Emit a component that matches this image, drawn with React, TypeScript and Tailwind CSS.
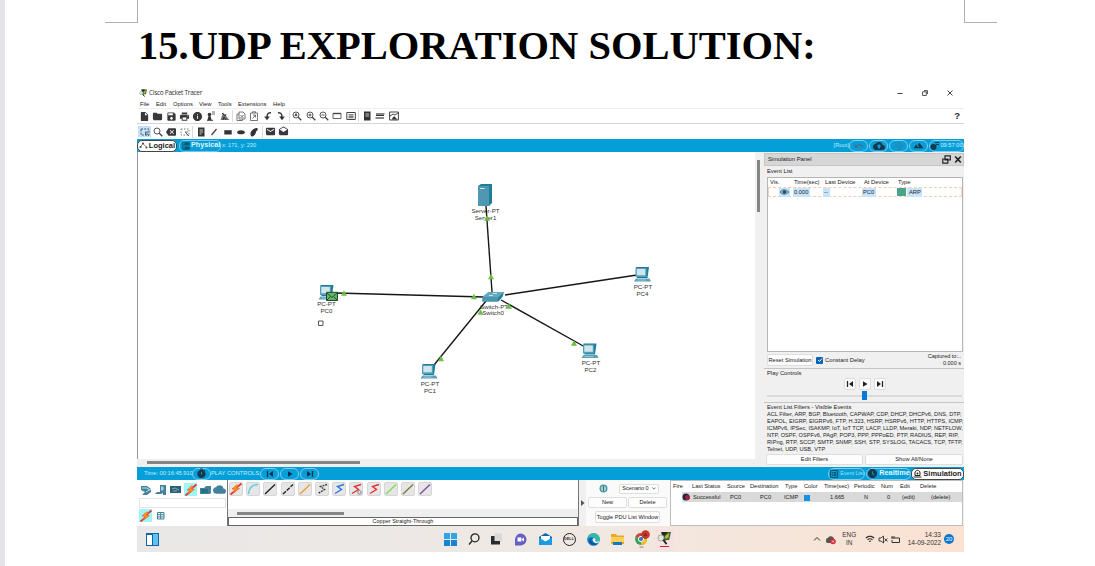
import React from 'react';
import {
  MdInsertDriveFile, MdFolder, MdSave, MdPrint, MdInfo, MdOutlineZoomIn, MdOutlineZoomOut,
  MdBackspace, MdArticle, MdSearch, MdEmail, MdDrafts, MdCloudUpload,
  MdDns, MdCloud, MdFilterHdr, MdUndo, MdOpenWith, MdAccessTimeFilled, MdWifi,
  MdOutlineListAlt, MdTimer,
} from 'react-icons/md';

const SANS = "font-['Liberation_Sans',Arial,sans-serif]";

function Cell({ children, on = false }: { children: React.ReactNode; on?: boolean }) {
  return (
    <span className={`flex h-[11px] w-[13.33px] shrink-0 items-center justify-center text-[11px] text-[#38383c] ${on ? 'bg-[#c5e3fa]' : ''}`}>
      {children}
    </span>
  );
}

const Sep = () => <span className="mx-[1px] h-[12px] w-px shrink-0 bg-[#dcdcdc]" />;

function Svg({ w = 10, h = 10, children }: { w?: number; h?: number; children: React.ReactNode }) {
  return (
    <svg width={w} height={h} viewBox={`0 0 ${w} ${h}`} className="shrink-0" fill="none">
      {children}
    </svg>
  );
}

function TracerLogo({ s = 8 }: { s?: number }) {
  return (
    <svg width={s} height={s} viewBox="0 0 16 16" className="shrink-0">
      <path d="M5 1h11l-2 9-6 1z" fill="#286b2a" />
      <path d="M5 1h7L8 6 6 8z" fill="#15301b" />
      <path d="M9 6l5-4-1 6-3 1z" fill="#dfa43a" />
      <circle cx="4.500" cy="8" r="3.500" fill="#dce7dc" stroke="#9aa89c" />
      <path d="M7 10l4 5" stroke="#222" strokeWidth="2" />
    </svg>
  );
}

function Zoom({ mark }: { mark: string }) {
  return (
    <Svg><circle cx="4" cy="4" r="3" stroke="#555" /><path d="M6.300 6.300L9.300 9.300" stroke="#444" strokeWidth="1.300" /><path d={mark} stroke="#444" strokeWidth=".9" /></Svg>
  );
}

function Toolbars() {
  return (
    <>
      <div className="flex h-[15px] items-center border-b border-[#d5d5d5] pl-[1px]">
        <Cell><MdInsertDriveFile /></Cell>
        <Cell><MdFolder /></Cell>
        <Cell><MdSave /></Cell>
        <Cell><MdPrint /></Cell>
        <Cell><MdInfo /></Cell>
        <Cell>
          <Svg><circle cx="3.500" cy="3.500" r="1.800" fill="#333" /><path d="M1 9.300h6" stroke="#333" /><path d="M2.500 5h2l1 4h-4z" fill="#333" /><path d="M6 1h3M6 3h3" stroke="#555" strokeWidth=".9" /></Svg>
        </Cell>
        <Cell>
          <Svg><path d="M.5 9L3 1.500 9.500 9z" fill="#777" /><path d="M2 2l3 3 1-2M3 9l1-3 2 3" stroke="#333" /></Svg>
        </Cell>
        <Sep />
        <Cell><Svg><path d="M3 1h4l2 2v5H3zM3 3H1v6.500h5.500V8M4.500 4l3 3M7.500 4l-3 3" stroke="#666" strokeWidth=".9" /></Svg></Cell>
        <Cell><Svg><path d="M1.500 2h7v7.500h-7zM3.500 2V.8h3V2M3.500 7.500l3-3.500M4 4h2.500v2.500" stroke="#666" strokeWidth=".9" /></Svg></Cell>
        <Cell><Svg><path d="M4 8C4 4 4 1.500 8 1.800" stroke="#333" strokeWidth="1.400" /><path d="M1.200 5.500h5.600L4 9.300z" fill="#333" /></Svg></Cell>
        <Cell><Svg><path d="M2 1.800C6 1.500 6 4 6 8" stroke="#333" strokeWidth="1.400" /><path d="M3.200 5.500h5.600L6 9.300z" fill="#333" /></Svg></Cell>
        <Sep />
        <Cell><Zoom mark="M2.800 5.200L4 2.500l1.200 2.700M3 4.400h2" /></Cell>
        <Cell><Zoom mark="M2.500 4h3M4 2.500v3" /></Cell>
        <Cell><Zoom mark="M2.500 4h3" /></Cell>
        <Cell><Svg><path d="M1 2.500h8v5H1z" stroke="#666" /><path d="M1 2.500h8" stroke="#444" strokeWidth="1.400" /></Svg></Cell>
        <Cell><Svg><path d="M.8 1.500h8.500v7H.8z" stroke="#444" /><path d="M2.500 3.800h5M2.500 5.300h5M2.500 6.800h5" stroke="#444" strokeWidth=".9" /></Svg></Cell>
        <Sep />
        <Cell><Svg><path d="M2 .5h6.500v9H2z" fill="#333" /><path d="M3.500 3h3.500M3.500 5h3.500" stroke="#ddd" strokeWidth=".9" /></Svg></Cell>
        <Cell><Svg><path d="M1 2h8.500v2H1zM.5 6h8.500v2H.5z" fill="#888" /><path d="M1 4.500h8" stroke="#333" /></Svg></Cell>
        <Cell><Svg><path d="M.6 1h8.800v8H.6z" stroke="#444" /><path d="M1 5l3-2 2 1 3-2" stroke="#444" /><path d="M2.500 8.500L5 5l3.500 3.500z" fill="#333" /></Svg></Cell>
        <span className="mr-[4px] ml-auto text-[9.500px] leading-none font-bold text-[#222]">?</span>
      </div>
      <div className="flex h-[15px] items-center pl-[1px]">
        <Cell on><Svg><path d="M1 2h8v6H1z" stroke="#456" strokeDasharray="2 1.200" /><path d="M5.500 5h3M5.500 5v3M6 5.500l3 3.500" stroke="#456" strokeWidth=".9" /></Svg></Cell>
        <Cell><Zoom mark="" /></Cell>
        <Cell><MdBackspace className="text-[10px]" /></Cell>
        <Cell><Svg><path d="M1 2h8v6H1z" stroke="#777" strokeDasharray="1.500 1.500" /><path d="M5 5l4 4M5 5h3" stroke="#666" /></Svg></Cell>
        <Sep />
        <Cell><Svg><path d="M2 .5h6.500v9H2z" fill="#333" /><path d="M3.500 3h3.500M3.500 5h3.500M3.500 7h2" stroke="#ddd" strokeWidth=".9" /></Svg></Cell>
        <Cell><Svg><path d="M2.500 8l5-6" stroke="#444" strokeWidth="1.300" /></Svg></Cell>
        <Cell><Svg><path d="M1.300 3.200h7.400v4.300H1.300z" fill="#333" /></Svg></Cell>
        <Cell><Svg><ellipse cx="5" cy="5.200" rx="3.800" ry="2" fill="#333" /></Svg></Cell>
        <Cell><Svg><path d="M1.500 7C1 4 6 .5 8 1c1.500 1 .5 3-1 3.500C7 7 5 9.500 3 9.500 2 9.500 1.500 8.500 1.500 7z" fill="#333" /></Svg></Cell>
        <Sep />
        <Cell><MdEmail /></Cell>
        <Cell><MdDrafts /></Cell>
      </div>
    </>
  );
}

function Pill({ children, className = '' }: { children: React.ReactNode; className?: string }) {
  return (
    <span className={`flex h-[12px] shrink-0 items-center justify-center rounded-full border border-[#7fcdec] text-[#18384c] ${className}`}>
      {children}
    </span>
  );
}

function TopBar() {
  return (
    <div className="flex h-[13px] shrink-0 items-center bg-[#049fd9] whitespace-nowrap">
      <span className="flex h-[12px] w-[40px] items-center justify-center gap-[1px] rounded-[5px] border border-[#444] bg-white text-[7.500px] font-bold text-[#222]">
        <Svg w={9} h={9}><path d="M1.500 6L4 2.500 7 6" stroke="#777" strokeWidth=".8" /><circle cx="1.500" cy="6" r="1" fill="#444" /><circle cx="4" cy="2.500" r="1" fill="#444" /><circle cx="7.500" cy="6.500" r="1" fill="#444" /></Svg>
        Logical
      </span>
      <span className="ml-[2px] flex h-[12px] w-[42px] items-center justify-between rounded-[5px] border border-[#6cc8ea] px-[1px] text-[7.200px] font-bold text-[#e0f5fe]">
        <MdDns className="shrink-0 text-[10px] text-[#0d5375]" />
        Physical
      </span>
      <span className="ml-[1px] text-[5.700px] text-[#c5ecfb]">x: 171, y: 230</span>
      <span className="ml-auto text-[5.800px] text-[#bce8fa]">[Root]</span>
      <Pill className="w-[19px]"><MdUndo className="text-[10px] text-[#4f6b85]" /></Pill>
      <Pill className="ml-[1px] w-[19px]"><MdCloudUpload className="text-[12px]" /></Pill>
      <Pill className="ml-[1px] w-[19px]"><MdOpenWith className="text-[10px] text-[#2f85ad]" /></Pill>
      <Pill className="ml-[1px] w-[19px]"><MdFilterHdr className="text-[11px]" /></Pill>
      <Pill className="ml-[1px] w-[35px] gap-[1px]">
        <Svg w={9} h={10}><circle cx="3.500" cy="6" r="3" fill="#18384c" /><path d="M5 1.500h4M6 3.500h3" stroke="#18384c" /></Svg>
        <span className="text-[5.700px] text-[#d7f3fd]">09:57:00</span>
      </Pill>
    </div>
  );
}

function Pc({ x, y }: { x: number; y: number }) {
  return (
    <g transform={`translate(${x} ${y})`}>
      <path d="M2 0h13l-1.500 11H3z" fill="#1f7d9c" />
      <path d="M1.500 1h11v9h-11z" fill="#4f9fba" />
      <path d="M2.800 2h8.500v6.300H2.800z" fill="#d3e4ea" />
      <path d="M2 11.500h13.500l1.500 3H0z" fill="#559fb7" />
      <path d="M3 13h9" stroke="#a9d1de" strokeWidth=".8" />
    </g>
  );
}

const LINKS = [
  [486, 206, 492, 292], [336, 293, 484, 297], [505, 295, 637, 275], [486, 301, 434, 365], [501, 300, 585, 347],
];
const LIGHTS = [
  [487, 218], [491, 276.500], [344, 293], [474, 296.500], [480.500, 312], [441, 358.500], [509, 306], [574, 343],
];
const LABELS: [string, number, number][] = [
  ['Server-PT', 485.500, 212.500], ['Server1', 485.500, 219.500], ['PC-PT', 326.500, 306.300], ['PC0', 326.500, 313.300],
  ['Switch-PT', 494, 308.500], ['Switch0', 493, 315.300], ['PC-PT', 643, 288.800], ['PC4', 642.500, 295.700],
  ['PC-PT', 591, 365.300], ['PC2', 590.500, 372.300], ['PC-PT', 430, 386.100], ['PC1', 430, 393],
];

function Topology() {
  return (
    <svg width="617" height="306" viewBox="138 152 617 306" className="block">
      {LABELS.map(([t, x, y], i) => (
        <text key={i} x={x} y={y} textAnchor="middle" fontSize="6.200" fill="#333" fontFamily="Liberation Sans, sans-serif">{t}</text>
      ))}
      {LINKS.map(([a, b, c, d], i) => <line key={i} x1={a} y1={b} x2={c} y2={d} stroke="#161616" strokeWidth="1.400" />)}
      <path d="M478 186l3-2h11v19l-3 3h-11z" fill="#1f7d9c" />
      <path d="M478 186h11v20h-11z" fill="#4f98b3" />
      <path d="M480 188.500h4.500" stroke="#d5e9ef" />
      <Pc x={318.500} y={285} />
      <Pc x={634} y={267} />
      <Pc x={581.500} y={343.500} />
      <Pc x={420.500} y={364} />
      <path d="M482.500 297l6-5h15.500l-1.500 5-4 4.500h-16z" fill="#2b829f" />
      <path d="M482.500 297h15.500v4.500h-15.500z" fill="#4c96b0" />
      <path d="M482.500 297l6-5h15.500l-5.500 5z" fill="#64a9bf" />
      <path d="M489 295.500h4M493 293.500h4" stroke="#d0e6ed" />
      {LIGHTS.map(([x, y], i) => <path key={i} d={`M${x - 3} ${y + 2.800}L${x} ${y - 2.700}L${x + 3} ${y + 2.800}z`} fill="#6abf45" />)}
      <path d="M326.500 292.300h11v8.200h-11z" fill="#63b36b" stroke="#1f4a26" />
      <path d="M327 293l5 4.500 5-4.500M327 300l3.500-3.500M337 300l-3.500-3.500" stroke="#1f4a26" fill="none" strokeWidth=".9" />
      <path d="M318.500 321h4.500v4.500h-4.500z" fill="#fff" stroke="#444" strokeWidth=".9" />
    </svg>
  );
}

function Workspace() {
  return (
    <div className="flex w-[627px] shrink-0 flex-col">
      <div className="flex h-[307px]">
        <div className="h-[307px] w-[618px] border-l border-[#999] bg-white"><Topology /></div>
        <div className="w-[9px] bg-[#f0f0f0] pt-[8px] pl-[2px]"><div className="h-[52px] w-[3px] bg-[#858585]" /></div>
      </div>
      <div className="h-[8px] bg-[#efefef] pt-[2px] pl-[10px]"><div className="h-[3px] w-[213px] bg-[#858585]" /></div>
    </div>
  );
}

const FILTERS: string[] = [
  'ACL Filter, ARP, BGP, Bluetooth, CAPWAP, CDP, DHCP, DHCPv6, DNS, DTP,',
  'EAPOL, EIGRP, EIGRPv6, FTP, H.323, HSRP, HSRPv6, HTTP, HTTPS, ICMP,',
  'ICMPv6, IPSec, ISAKMP, IoT, IoT TCP, LACP, LLDP, Meraki, NDP, NETFLOW,',
  'NTP, OSPF, OSPFv6, PAgP, POP3, PPP, PPPoED, PTP, RADIUS, REP, RIP,',
  'RIPng, RTP, SCCP, SMTP, SNMP, SSH, STP, SYSLOG, TACACS, TCP, TFTP,',
  'Telnet, UDP, USB, VTP',
];

function Btn({ children, className = '' }: { children: React.ReactNode; className?: string }) {
  return (
    <span className={`flex shrink-0 items-center justify-center rounded-[2px] border border-[#dedede] bg-[#fdfdfd] ${className}`}>{children}</span>
  );
}

function SimulationPanel() {
  return (
    <div className="flex h-[315px] w-[200px] flex-col bg-[#f0f0f0] text-[5.800px] leading-[7px] whitespace-nowrap text-[#222]">
      <div className="mt-[1px] flex h-[13px] shrink-0 items-center border border-[#c6c6c6] bg-[#d6d6d6] pr-[1px] pl-[3px]">
        Simulation Panel
        <span className="ml-auto flex gap-[3px]">
          <Svg w={9} h={9}><path d="M3 .8h5.300v4H3zM.8 4h5v4.200h-5z" fill="#ddd" stroke="#222" strokeWidth="1.200" /></Svg>
          <Svg w={8} h={9}><path d="M1.200 1.500l5.600 6M6.800 1.500l-5.600 6" stroke="#222" strokeWidth="1.700" /></Svg>
        </span>
      </div>
      <div className="flex h-[11px] shrink-0 items-center pl-[3px]">Event List</div>
      <div className="ml-[3px] h-[175px] w-[196px] shrink-0 border border-[#b5b5b5] bg-white">
        <div className="flex h-[9px] items-center pl-[2px]">
          <span className="w-[24px]">Vis.</span><span className="w-[31px]">Time(sec)</span><span className="w-[39px]">Last Device</span>
          <span className="w-[34px]">At Device</span><span>Type</span>
        </div>
        <div className="flex h-[10px] items-center border border-dashed border-[#f5cdb8] pl-[10px]">
          <span className="flex h-[9px] w-[11px] items-center bg-[#c8e4fb]">
            <Svg w={11} h={8}><path d="M1 4c2-3 6-3 9 0-3 3-7 3-9 0z" fill="#8cb7cc" stroke="#4d849f" /><circle cx="5.500" cy="4" r="1.800" fill="#214b60" /></Svg>
          </span>
          <span className="ml-[3px] h-[9px] w-[17px] bg-[#c8e4fb] pl-[1px] leading-[9px]">0.000</span>
          <span className="ml-[13px] h-[9px] w-[7px] bg-[#c8e4fb] pl-[1px] leading-[9px]">--</span>
          <span className="ml-[32px] h-[9px] w-[14px] bg-[#c8e4fb] pl-[1px] leading-[9px]">PC0</span>
          <span className="ml-[21px] h-[8px] w-[9px] bg-[#4ca389]" />
          <span className="ml-[1px] h-[9px] w-[15px] bg-[#c8e4fb] pl-[2px] leading-[9px]">ARP</span>
        </div>
      </div>
      <div className="flex h-[16px] shrink-0 items-center pl-[3px]">
        <Btn className="h-[12px] w-[46px] text-[5.700px]">Reset Simulation</Btn>
        <span className="mr-[2px] ml-[3px] flex h-[7px] w-[7px] items-center justify-center rounded-[1px] bg-[#0a63b8]">
          <Svg w={6} h={6}><path d="M1 3l1.500 1.500L5 1.500" stroke="#fff" /></Svg>
        </span>
        Constant Delay
        <span className="mr-[3px] ml-auto text-right text-[5.500px]">Captured to:..<br />0.000 s</span>
      </div>
      <div className="flex h-[34px] shrink-0 flex-col border-t border-[#c4c4c4] pl-[3px]">
        <div className="flex h-[9px] items-center">Play Controls</div>
        <div className="flex gap-[3px] pl-[77px]">
          <Btn className="h-[12px] w-[12px]"><Svg w={8} h={8}><path d="M1.500 1v6" stroke="#222" strokeWidth="1.300" /><path d="M7 1v6L3 4z" fill="#222" /></Svg></Btn>
          <Btn className="h-[12px] w-[12px]"><Svg w={8} h={8}><path d="M2 1.300v5.400L6.500 4z" fill="#222" /></Svg></Btn>
          <Btn className="h-[12px] w-[12px]"><Svg w={8} h={8}><path d="M6.500 1v6" stroke="#222" strokeWidth="1.300" /><path d="M1 1v6l4-3z" fill="#222" /></Svg></Btn>
        </div>
        <div className="mt-[1px] flex h-[9px] items-center">
          <span className="h-[2px] w-[95px] border-y border-[#dadada]" /><span className="h-[9px] w-[5px] bg-[#0a78d4]" /><span className="h-[2px] w-[95px] border-y border-[#dadada]" />
        </div>
      </div>
      <div className="flex h-[65px] shrink-0 flex-col border-t border-[#c4c4c4] pl-[3px]">
        <div className="h-[8px] shrink-0 pt-[1px]">Event List Filters - Visible Events</div>
        {FILTERS.map((f) => <div key={f} className="h-[7.1px] shrink-0 text-[5.650px] leading-[7px]">{f}</div>)}
        <div className="-ml-px flex gap-[2px]">
          <Btn className="h-[11px] w-[97px]">Edit Filters</Btn>
          <Btn className="h-[11px] w-[98px]">Show All/None</Btn>
        </div>
      </div>
    </div>
  );
}

function TimeBar() {
  return (
    <div className="flex h-[13px] shrink-0 items-center bg-[#049fd9] text-[5.700px] whitespace-nowrap text-[#c5ecfb]">
      <span className="w-[55px] pl-[7px]">Time: 00:16:45.910</span>
      <Pill className="w-[19px]"><MdTimer className="text-[11px]" /></Pill>
      <span className="w-[49px] text-[5.800px]">PLAY CONTROLS:</span>
      <Pill className="w-[19px]"><Svg w={8} h={8}><path d="M1.500 1v6" stroke="#10304a" strokeWidth="1.300" /><path d="M7 1v6L3 4z" fill="#10304a" /></Svg></Pill>
      <Pill className="ml-px w-[19px]"><Svg w={8} h={8}><path d="M2 1.300v5.400L6.500 4z" fill="#10304a" /></Svg></Pill>
      <Pill className="ml-px w-[19px]"><Svg w={8} h={8}><path d="M6.500 1v6" stroke="#10304a" strokeWidth="1.300" /><path d="M1 1v6l4-3z" fill="#10304a" /></Svg></Pill>
      <Pill className="ml-auto w-[37px] gap-[1px]"><MdOutlineListAlt className="shrink-0 text-[10px]" /><span className="text-[5.300px] text-[#a9e0f7]">Event List</span></Pill>
      <Pill className="ml-[1px] w-[45px] gap-[1px]"><MdAccessTimeFilled className="shrink-0 text-[11px]" /><span className="text-[7.300px] font-bold text-[#e6f7fe]">Realtime</span></Pill>
      <span className="flex h-[12px] w-[53px] items-center justify-center gap-px rounded-[5px] border border-[#444] bg-white text-[7.500px] font-bold text-[#222]">
        <Svg w={9} h={9}><path d="M.5 8h8M2 6.500V4c0-3.500 5-3.500 5 0v2.500z" stroke="#222" /><circle cx="4.500" cy="4.500" r="1" fill="#222" /></Svg>
        Simulation
      </span>
    </div>
  );
}

const Bolt = () => (
  <Svg w={12} h={12}><path d="M11.500 .5L6 5M6 7L.5 11.500" stroke="#e8352c" strokeWidth="1.800" /><path d="M6.500 2l-4.500 4 3 .5-2 3.500 6.500-4.500-3-.5 2-2.500z" fill="#f7941c" stroke="#ef5a24" strokeWidth=".6" /></Svg>
);

const WIRES: { c: string; k: string }[] = [
  { c: '#e8452c', k: 'bolt' }, { c: '#54cbe8', k: 'curve' }, { c: '#222', k: 'line' }, { c: '#222', k: 'dash' }, { c: '#f39a2d', k: 'line' }, { c: '#333', k: 'zdash' },
  { c: '#2e74e6', k: 'zig' }, { c: '#e62e35', k: 'zigo' }, { c: '#e62e35', k: 'zig' }, { c: '#79df4f', k: 'line' }, { c: '#81783a', k: 'line' }, { c: '#7b4da6', k: 'line' },
];

function Wire({ c, k }: { c: string; k: string }) {
  if (k === 'bolt') return <Bolt />;
  const zig = k.startsWith('z');
  const d = zig ? 'M11 1.500L4.500 3.500L8.500 6.500L2 10.500' : k === 'curve' ? 'M1.500 11C2 5 5 1.500 11 1.500' : 'M1 11L11 1.500';
  return (
    <Svg w={12} h={12}>
      <path d={d} stroke={c} strokeWidth="1.400" strokeDasharray={k === 'dash' ? '4 1.200' : k === 'zdash' ? '1.800 1' : undefined} />
      {k === 'zigo' && <circle cx="9.500" cy="9.500" r="1.700" stroke="#777" fill="#eee" />}
    </Svg>
  );
}

function DeviceBox() {
  return (
    <div className="h-[46px] w-[90px] shrink-0 bg-white pl-[2px]">
      <div className="flex h-[17px] items-center pt-[2px] text-[#43829a]">
        <span className="flex w-[15px] justify-center"><Svg w={13} h={12}><path d="M1 2h6l4 3v3l-4 3H2L5 8 1 6z" fill="#43829a" /><path d="M2 4h5l3 2M6 8l5-3" stroke="#c5e0e8" /></Svg></span>
        <span className="flex w-[14px] justify-center"><Svg w={12} h={12}><path d="M5 1h6v10H8V9L6 10H0l2-2h3z" fill="#43829a" /><path d="M6 2.500h2.500v4H6z" fill="#a9cfdb" /></Svg></span>
        <span className="flex w-[15px] justify-center"><Svg w={11} h={9}><path d="M0 1h11v7H0z" fill="#286077" /><path d="M2 4l3-1 4 2M3 6h4" stroke="#9cc3d1" strokeWidth=".8" /></Svg></span>
        <span className="mx-px flex h-[13px] w-[13px] items-center justify-center bg-[#9ff5fa]"><Bolt /></span>
        <span className="flex w-[14px] justify-center"><Svg w={11} h={10}><path d="M0 3h4l2-2h5v7l-1 1H0z" fill="#43829a" /><path d="M1 4h7v4H1z" fill="#286e88" /></Svg></span>
        <span className="flex w-[15px] justify-center"><MdCloud className="text-[13px]" /></span>
      </div>
      <div className="mt-[1px] h-[10px] w-[87px] border border-[#e4e4e4]" />
      <div className="mt-[1px] flex items-center">
        <span className="flex h-[13px] w-[13px] items-center justify-center bg-[#9ff5fa]"><Bolt /></span>
        <span className="ml-[5px]"><Svg w={8} h={8}><path d="M.5 .5h6.500v6.500H.5zM.5 2.700h6.500M.5 4.900h6.500M3.700 .5v6.500" stroke="#43829a" /></Svg></span>
      </div>
    </div>
  );
}

const PDU: [string, string][] = [
  ['w-[19px]', 'Fire'], ['w-[35px]', 'Last Status'], ['w-[23px]', 'Source'], ['w-[35px]', 'Destination'],
  ['w-[19px]', 'Type'], ['w-[20px]', 'Color'], ['w-[30px]', 'Time(sec)'], ['w-[27px]', 'Periodic'],
  ['w-[19px]', 'Num'], ['w-[20px]', 'Edit'], ['w-[36px]', 'Delete'],
];

function BottomPanel() {
  return (
    <div className="flex h-[46px] shrink-0 bg-[#f0f0f0] text-[5.800px] leading-[7px] whitespace-nowrap text-[#222]">
      <DeviceBox />
      <div className="flex w-[352px] shrink-0 flex-col border-x border-[#777] bg-white">
        <div className="flex h-[29px] gap-[3.2px] pt-[2px] pl-[1px]">
          {WIRES.map((w, i) => (
            <span key={i} className="flex h-[14px] w-[14px] shrink-0 items-center justify-center rounded-[2px] border border-[#d6d6d6] bg-[#e6e6e6]"><Wire {...w} /></span>
          ))}
        </div>
        <div className="h-[8px] bg-[#efefef] pt-[3px] pl-[9px]"><div className="h-[3px] w-[107px] bg-[#858585]" /></div>
        <div className="flex h-[9px] items-center justify-center border border-[#666] text-[5.500px]">Copper Straight-Through</div>
      </div>
      <div className="flex w-[7px] items-center bg-[#f0f0f0] pl-[2px]"><Svg w={4} h={6}><path d="M0 0v6l3.500-3z" fill="#555" /></Svg></div>
      <div className="flex w-[84px] shrink-0 flex-col bg-[#fafafa] pl-[2px]">
        <div className="flex h-[17px] items-center pl-[11px]">
          <Svg w={9} h={9}><circle cx="4.500" cy="4.500" r="4" fill="#4c98ad" /><circle cx="4.500" cy="4.500" r="2.600" fill="#a9d4c8" /><path d="M4.500 2v5" stroke="#376" /></Svg>
          <Btn className="ml-[11px] h-[10px] w-[40px] gap-[3px] text-[5.500px]">Scenario 0 <Svg w={4} h={3}><path d="M.3 .5L2 2.200 3.700 .5" stroke="#555" strokeWidth=".8" /></Svg></Btn>
        </div>
        <div className="flex gap-px"><Btn className="h-[11px] w-[39px] text-[5.500px]">New</Btn><Btn className="h-[11px] w-[39px] text-[5.500px]">Delete</Btn></div>
        <Btn className="mt-[3px] ml-[7px] h-[12px] w-[65px] text-[5.600px]">Toggle PDU List Window</Btn>
      </div>
      <div className="flex w-[293px] shrink-0 flex-col border border-[#bdbdbd] bg-white text-[5.700px]">
        <div className="flex h-[11px] items-center pl-[2px]">{PDU.map(([w, h]) => <span key={h} className={`${w} shrink-0`}>{h}</span>)}</div>
        <div className="ml-[11px] flex h-[10px] items-center bg-[#d9d9d9]">
          <Svg w={9} h={8}><circle cx="4" cy="4" r="3.500" fill="#212440" /><circle cx="5.500" cy="4.500" r="2.500" fill="#a1203f" /></Svg>
          <span className="w-[38px] pl-[2px]">Successful</span><span className="w-[29px] pl-[1px]">PC0</span><span className="w-[26px] pl-[2px]">PC0</span>
          <span className="w-[20px]">ICMP</span><span className="mt-[2px] h-[6px] w-[6px] bg-[#1592e6]" /><span className="w-[37px] pl-[20px]">1.665</span>
          <span className="w-[24px] pl-[17px]">N</span><span className="w-[24px] pl-[16px]">0</span><span className="w-[29px] pl-[7px]">(edit)</span><span className="pl-[7px]">(delete)</span>
        </div>
      </div>
    </div>
  );
}

function Taskbar() {
  return (
    <div className="flex h-[26px] shrink-0 items-center bg-linear-to-r from-[#e9e7e7] via-[#efe9e4] to-[#fbe2d2] pl-[9px] text-[#333]">
      <Svg w={13} h={13}><path d="M0 0h13v13H0z" fill="#1263ad" /><path d="M1 2h5v10H1z" fill="#fff" /><path d="M7 1h5v11H7z" fill="#5fc3f2" /></Svg>
      <div className="ml-[279px] flex items-center">
        <span className="flex w-[24px] justify-center"><Svg w={13} h={13}><path d="M0 0h6v6H0zM7 0h6v6H7zM0 7h6v6H0zM7 7h6v6H7z" fill="#1684cf" /><path d="M0 0h6v6H0zM7 0h6v6H7z" fill="#33a5e4" /></Svg></span>
        <span className="flex w-[24px] justify-center"><Svg w={12} h={12}><circle cx="7" cy="4.800" r="4" stroke="#222" strokeWidth="1.300" /><path d="M4 8L1 11.500" stroke="#222" strokeWidth="1.300" /></Svg></span>
        <span className="flex w-[22px] justify-center"><Svg w={12} h={12}><path d="M0 3h9v8.500H0z" fill="#2b2b2b" /><path d="M3.500 .5H11v7.500H3.500z" fill="#d7d9da" /></Svg></span>
        <span className="flex w-[25px] justify-center"><Svg w={13} h={13}><path d="M6.500 .5a6 6 0 110 12H1v-6a6 6 0 015.500-6z" fill="#6560c4" /><path d="M3.500 4.500h4v4h-4zM8 6l2-1.500v4L8 7z" fill="#fff" /></Svg></span>
        <span className="flex w-[24px] justify-center"><Svg w={13} h={12}><path d="M0 4l6.500-4L13 4v8H0z" fill="#0b65b5" /><path d="M2 3h9v4L6.500 9 2 7z" fill="#fff" /><path d="M0 4.500l6.500 4 6.500-4V12H0z" fill="#1c9be4" /></Svg></span>
        <span className="flex w-[24px] justify-center"><span className="flex h-[13px] w-[13px] items-center justify-center rounded-full border border-[#222] text-[3.900px] font-bold">DELL</span></span>
        <span className="flex w-[24px] justify-center"><Svg w={13} h={13}><circle cx="6.500" cy="6.500" r="6.300" fill="#1579c8" /><path d="M.5 5.500C1.500-1.500 12-1.500 12.800 6c0 3-3 3.500-5 2 2-3-2.500-5.500-7.300-2.500z" fill="#35b9a6" /><path d="M5.500 5c-3 2-1 6 5.500 5.500-2 2-6.500 2-8.500-1-1-3 1-4.500 3-4.500z" fill="#0c529b" /><path d="M6 5.500c2.500-1 3 1 2 2.500 1.500 1.500 4 .5 4.500-.5 0 2-2 3-4 2.500S5 7 6 5.500z" fill="#eef5f8" /></Svg></span>
        <span className="flex w-[24px] justify-center"><Svg w={13} h={12}><path d="M0 1h5l1 1.500h7V11H0z" fill="#eca91f" /><path d="M0 4h13v5H0z" fill="#fcd15b" /><path d="M2 9h9v3H2z" fill="#1676c6" /></Svg></span>
        <span className="flex w-[25px] justify-center">
          <Svg w={16} h={18}><circle cx="7" cy="9" r="6" fill="#3aa350" /><path d="M7 9L1.500 6.500C3 2 11 2 12.500 6.500z" fill="#dc4335" /><path d="M7 9h6c0 3-2 6-6 6z" fill="#f5bd24" /><circle cx="7" cy="9" r="2.600" fill="#3579df" stroke="#fff" /><circle cx="11.500" cy="4.500" r="4.300" fill="#c5392a" /><path d="M10.500 6L11.500 3.500l1 2.500" stroke="#5f1812" strokeWidth=".8" /><path d="M5.500 17h4" stroke="#888" /></Svg>
        </span>
        <span className="flex h-[21px] w-[20px] flex-col items-center justify-center rounded-[2px] bg-[#f9e1e1]"><TracerLogo s={14} /><span className="mt-px h-[1.500px] w-[9px] bg-[#cc2530]" /></span>
      </div>
      <div className="ml-auto flex items-center pr-[10px]">
        <Svg w={8} h={6}><path d="M1 4.500L4 1.500l3 3" stroke="#333" /></Svg>
        <span className="ml-[4px]"><Svg w={11} h={11}><path d="M1 6c0-2 2-2 2-2 1-3 6-2 6 1v4H3C1 9 1 8 1 6z" fill="#555" /><circle cx="8" cy="7.500" r="2.800" fill="#d92c35" /><path d="M7 6.500l2 2M9 6.500l-2 2" stroke="#fff" strokeWidth=".7" /></Svg></span>
        <span className="ml-[6px] w-[15px] text-center text-[6.400px] leading-[8px]">ENG<br />IN</span>
        <MdWifi className="ml-[8px] text-[10px]" />
        <span className="ml-[3px]"><Svg w={10} h={9}><path d="M1 3h2l2.500-2v7L3 6H1zM6.500 3.500l3 3M9.500 3.500l-3 3" stroke="#333" strokeWidth=".9" /></Svg></span>
        <span className="ml-[3px]"><Svg w={10} h={9}><path d="M3.500 3H8.500v4.500H1V5M1 1v2.500M3 1v2.500M.5 3h3" stroke="#333" /></Svg></span>
        <span className="ml-[7px] text-right text-[6.500px] leading-[8px] whitespace-nowrap">14:33<br />14-09-2022</span>
        <span className="ml-[3px] flex h-[10px] w-[10px] items-center justify-center rounded-full bg-[#0b76ce] text-[6px] text-white">20</span>
      </div>
    </div>
  );
}

const MENU: [string, string][] = [
  ['w-[16px]', 'File'], ['w-[17px]', 'Edit'], ['w-[26px]', 'Options'], ['w-[19px]', 'View'], ['w-[20px]', 'Tools'], ['w-[35px]', 'Extensions'], ['w-[20px]', 'Help'],
];

export default function App() {
  return (
    <div className={`flex h-[566px] w-[1095px] overflow-hidden bg-white ${SANS}`}>
      <div className="w-[5px] shrink-0 bg-[#e2e4e7]" />
      <div className="flex w-[1090px] flex-col">
        <div className="flex h-[23px] shrink-0 justify-between pr-[98px] pl-[100px]">
          <div className="w-[33px] border-r border-b border-[#b0b0b0]" />
          <div className="w-[33px] border-b border-l border-[#b0b0b0]" />
        </div>
        <h1 className="h-[63px] shrink-0 pl-[133px] font-['Liberation_Serif',serif] text-[40.500px] leading-[46px] font-bold whitespace-nowrap text-black">
          15.UDP EXPLORATION SOLUTION:
        </h1>
        <div className="ml-[132px] flex w-[827px] shrink-0 flex-col">
          <div className="flex h-[13px] items-center pl-[2px] font-['Open_Sans',sans-serif] text-[6.600px] text-[#333]">
            <TracerLogo s={8} />
            <span className="ml-[2px] pt-px tracking-[-0.33px]">Cisco Packet Tracer</span>
            <span className="mr-[11px] ml-auto flex items-center gap-[19px]">
              <Svg w={6} h={6}><path d="M.5 3.500h5" stroke="#444" /></Svg>
              <Svg w={6} h={6}><path d="M.6 1.800h3.700v3.700H.6zM2 .6h3.500v3.500" stroke="#444" strokeWidth=".9" /></Svg>
              <Svg w={6} h={6}><path d="M.5 .5l5 5M5.500 .5l-5 5" stroke="#333" strokeWidth=".9" /></Svg>
            </span>
          </div>
          <div className="flex h-[10px] items-center border-b border-[#eee] pt-px pl-[3px] text-[5.800px] text-[#222]">
            {MENU.map(([w, m]) => <span key={m} className={w}>{m}</span>)}
          </div>
          <Toolbars />
          <TopBar />
          <div className="flex h-[315px] shrink-0"><Workspace /><SimulationPanel /></div>
          <TimeBar />
          <BottomPanel />
          <Taskbar />
        </div>
      </div>
    </div>
  );
}
